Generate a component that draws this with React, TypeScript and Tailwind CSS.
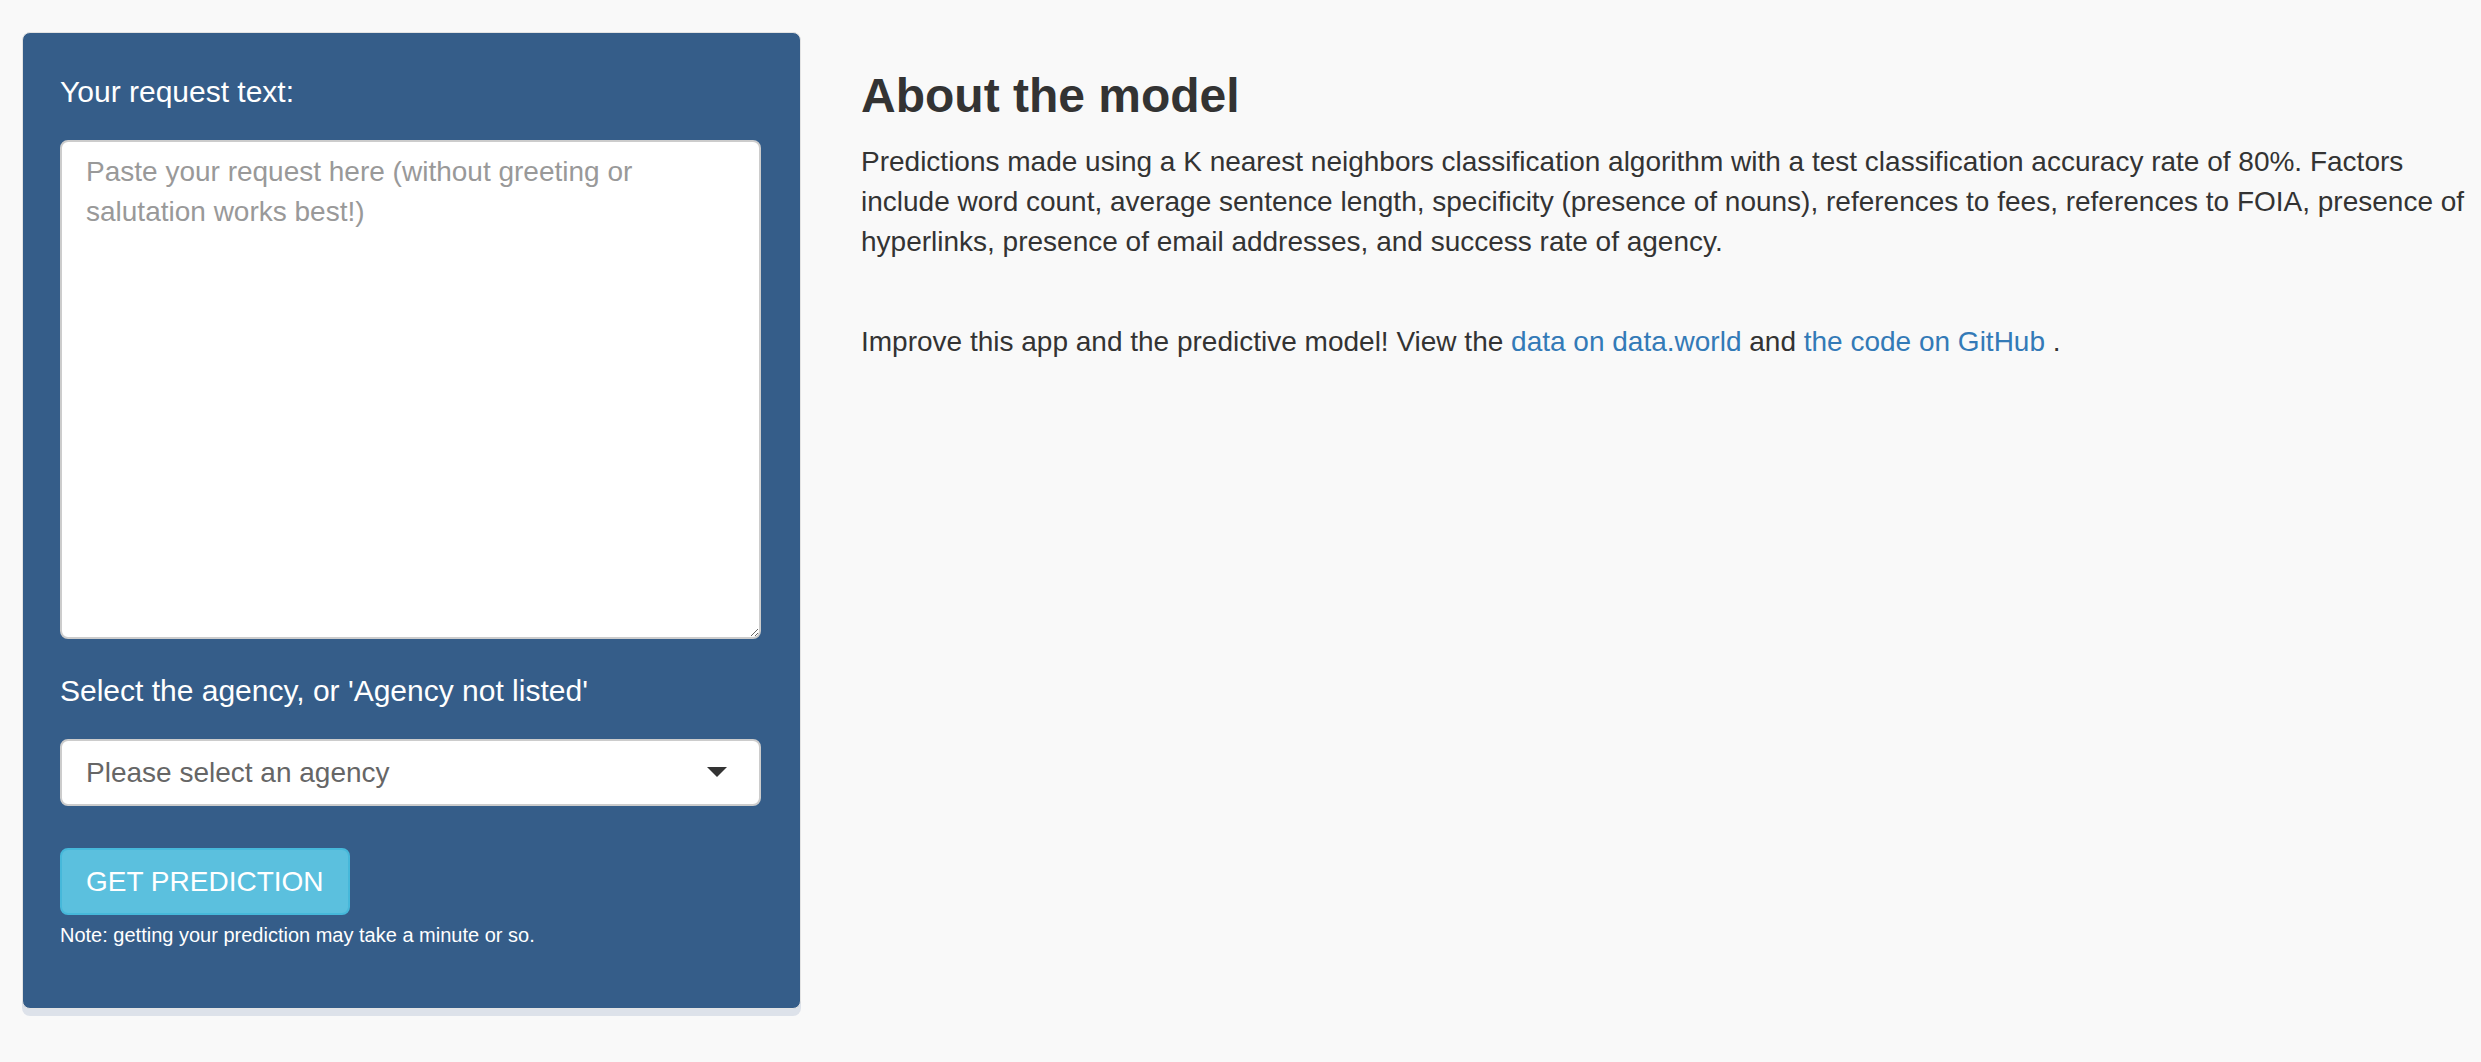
import { useState } from "react";

const App = () => {
  const [agency, setAgency] = useState("");

  return (
    <div className="min-h-screen w-full bg-[#f9f9f9] font-['Liberation_Sans',Arial,sans-serif] text-[#333]">
      <div className="flex items-start pl-[22px] pr-[10px] pt-[32px]">
        {/* Sidebar panel */}
        <div className="w-[779px] shrink-0 rounded-[8px] border border-[#e3e3e3] bg-[#355d89] px-[37px] pt-[37px] pb-[40px] shadow-[0_7px_0_0_#dde2ea]">
          <label className="block text-[30px] leading-[43px] text-white mb-[27px]">Your request text:</label>
          <textarea
            className="block h-[499px] w-[701px] resize-y rounded-[8px] border-2 border-[#cccccc] bg-white px-[24px] py-[10px] text-[28px] leading-[40px] text-[#555] placeholder:text-[#999] outline-none"
            placeholder="Paste your request here (without greeting or salutation works best!)"
          />

          <label className="mt-[30px] block text-[30px] leading-[43px] text-white mb-[27px]">
            Select the agency, or 'Agency not listed'
          </label>
          <div className="relative w-[701px]">
            <select
              value={agency}
              onChange={(e) => setAgency(e.target.value)}
              className="block h-[67px] w-full appearance-none rounded-[8px] border-2 border-[#cccccc] bg-white pl-[24px] pr-[60px] text-[28px] text-[#666] outline-none"
            >
              <option value="">Please select an agency</option>
              <option value="na">Agency not listed</option>
            </select>
            {/* caret */}
            <div className="pointer-events-none absolute right-[34px] top-[28px] h-0 w-0 border-x-[10px] border-t-[10px] border-x-transparent border-t-[#333]" />
          </div>

          <button className="mt-[42px] block h-[67px] rounded-[8px] border-2 border-[#46b8da] bg-[#5bc0de] px-[24px] text-[28px] uppercase text-white">
            Get prediction
          </button>
          <p className="mt-[6px] mb-[19px] text-[20px] leading-[28px] text-white">
            Note: getting your prediction may take a minute or so.
          </p>
        </div>

        {/* Main content */}
        <div className="ml-[60px] flex-1">
          <h3 className="mt-[37px] mb-[20px] text-[48px] font-bold leading-[53px] text-[#333]">About the model</h3>
          <p className="mb-[20px] text-[28px] leading-[40px]">
            Predictions made using a K nearest neighbors classification algorithm with a test classification accuracy
            rate of 80%. Factors include word count, average sentence length, specificity (presence of nouns),
            references to fees, references to FOIA, presence of hyperlinks, presence of email addresses, and success
            rate of agency.
          </p>
          <div className="h-[40px]" />
          <p className="text-[28px] leading-[40px]">
            Improve this app and the predictive model! View the{" "}
            <a href="#" className="text-[#337ab7]">data on data.world</a> and{" "}
            <a href="#" className="text-[#337ab7]">the code on GitHub</a> .
          </p>
        </div>
      </div>
    </div>
  );
};

export default App;
